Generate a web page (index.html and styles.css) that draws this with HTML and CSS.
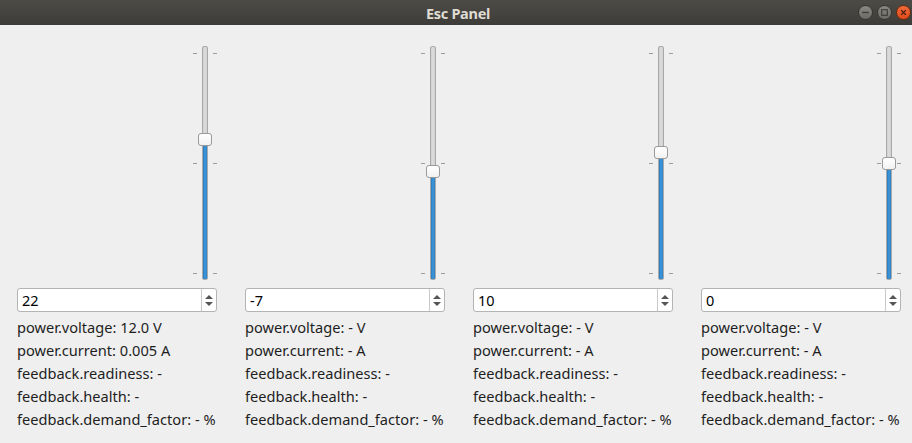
FILE: index.html
```html
<!DOCTYPE html>
<html>
<head>
<meta charset="utf-8">
<link rel="stylesheet" href="styles.css">
</head>
<body>
<div class="window">
  <div class="titlebar">
    <span class="title">Esc Panel</span>
    <div class="controls">
      <span class="wbtn"><svg width="14" height="14" viewBox="0 0 14 14"><line x1="3.5" y1="7" x2="10.5" y2="7" stroke="#3b3a36" stroke-width="1.4"/></svg></span>
      <span class="wbtn"><svg width="14" height="14" viewBox="0 0 14 14"><rect x="4" y="4" width="6" height="6" fill="none" stroke="#3b3a36" stroke-width="1.2"/></svg></span>
      <span class="wbtn close"><svg width="14" height="14" viewBox="0 0 14 14"><path d="M4.5 4.5 L9.5 9.5 M9.5 4.5 L4.5 9.5" stroke="#3b1a10" stroke-width="1.3"/></svg></span>
    </div>
  </div>
  <div class="panel">
    <div class="esc">
      <div class="slider-row">
        <div class="slider">
          <span class="tick l t0"></span><span class="tick r t0"></span>
          <span class="tick l t1"></span><span class="tick r t1"></span>
          <span class="tick l t2"></span><span class="tick r t2"></span>
          <div class="groove"><div class="fill" style="top: 95px"></div></div>
          <div class="handle" style="top: 89px"></div>
        </div>
      </div>
      <div class="spin"><span class="val">22</span><span class="arrows"><i class="up"></i><i class="down"></i></span></div>
      <div class="info">
        <div>power.voltage: 12.0 V</div>
        <div>power.current: 0.005 A</div>
        <div>feedback.readiness: -</div>
        <div>feedback.health: -</div>
        <div>feedback.demand_factor: - %</div>
      </div>
    </div>
    <div class="esc">
      <div class="slider-row">
        <div class="slider">
          <span class="tick l t0"></span><span class="tick r t0"></span>
          <span class="tick l t1"></span><span class="tick r t1"></span>
          <span class="tick l t2"></span><span class="tick r t2"></span>
          <div class="groove"><div class="fill" style="top: 127px"></div></div>
          <div class="handle" style="top: 121px"></div>
        </div>
      </div>
      <div class="spin"><span class="val">-7</span><span class="arrows"><i class="up"></i><i class="down"></i></span></div>
      <div class="info">
        <div>power.voltage: - V</div>
        <div>power.current: - A</div>
        <div>feedback.readiness: -</div>
        <div>feedback.health: -</div>
        <div>feedback.demand_factor: - %</div>
      </div>
    </div>
    <div class="esc">
      <div class="slider-row">
        <div class="slider">
          <span class="tick l t0"></span><span class="tick r t0"></span>
          <span class="tick l t1"></span><span class="tick r t1"></span>
          <span class="tick l t2"></span><span class="tick r t2"></span>
          <div class="groove"><div class="fill" style="top: 108px"></div></div>
          <div class="handle" style="top: 102px"></div>
        </div>
      </div>
      <div class="spin"><span class="val">10</span><span class="arrows"><i class="up"></i><i class="down"></i></span></div>
      <div class="info">
        <div>power.voltage: - V</div>
        <div>power.current: - A</div>
        <div>feedback.readiness: -</div>
        <div>feedback.health: -</div>
        <div>feedback.demand_factor: - %</div>
      </div>
    </div>
    <div class="esc">
      <div class="slider-row">
        <div class="slider">
          <span class="tick l t0"></span><span class="tick r t0"></span>
          <span class="tick l t1"></span><span class="tick r t1"></span>
          <span class="tick l t2"></span><span class="tick r t2"></span>
          <div class="groove"><div class="fill" style="top: 119px"></div></div>
          <div class="handle" style="top: 113px"></div>
        </div>
      </div>
      <div class="spin"><span class="val">0</span><span class="arrows"><i class="up"></i><i class="down"></i></span></div>
      <div class="info">
        <div>power.voltage: - V</div>
        <div>power.current: - A</div>
        <div>feedback.readiness: -</div>
        <div>feedback.health: -</div>
        <div>feedback.demand_factor: - %</div>
      </div>
    </div>
  </div>
</div>
</body>
</html>
```

FILE: styles.css
```css
* { box-sizing: border-box; }
html, body { margin: 0; padding: 0; }
body {
  width: 912px;
  height: 443px;
  overflow: hidden;
  background: #efefef;
  font-family: "Noto Sans", "DejaVu Sans", sans-serif;
  color: #1e1e1e;
}
.window { width: 912px; height: 443px; display: flex; flex-direction: column; }
.titlebar {
  height: 25px;
  flex: none;
  background: linear-gradient(#4d4b46, #3d3c38);
  position: relative;
  display: flex;
  align-items: center;
  justify-content: center;
}
.title {
  color: #dfdbd2;
  font-family: "Noto Sans", "DejaVu Sans", sans-serif;
  font-weight: bold;
  font-size: 14.5px;
  letter-spacing: -0.3px;
  margin-left: 4px;
}
.controls {
  position: absolute;
  right: 1px;
  top: 5px;
  display: flex;
  gap: 4px;
}
.wbtn {
  width: 15px; height: 15px;
  border-radius: 50%;
  background: linear-gradient(#8a8883, #6c6a65);
  border: 1px solid #35342f;
  display: flex; align-items: center; justify-content: center;
}
.wbtn svg { width: 13px; height: 13px; }
.close { background: linear-gradient(#f26b3a, #df4a18); border-color: #6a2a10; }
.panel {
  display: grid;
  grid-template-columns: repeat(4, 200px);
  column-gap: 28px;
  padding: 19px 0 0 17px;
}
.esc { display: flex; flex-direction: column; }
.slider-row { display: flex; justify-content: flex-end; height: 238px; }
.slider { position: relative; width: 24px; height: 238px; }
.tick {
  position: absolute;
  width: 4px; height: 1px;
  background: #9c9c9c;
}
.tick.l { left: 0; }
.tick.r { right: 0; }
.t0 { top: 9px; }
.t1 { top: 119px; }
.t2 { top: 229px; }
.groove {
  position: absolute;
  left: 9px; top: 2px;
  width: 6px; height: 234px;
  border: 1px solid #a9a9a9;
  border-radius: 2px;
  background: linear-gradient(90deg, #cfcfcf, #dedede 50%, #cfcfcf);
  overflow: hidden;
}
.fill {
  position: absolute;
  left: -1px; right: -1px; bottom: -1px;
  background: linear-gradient(90deg, #2a79b8, #3d97dc 50%, #2f82c4);
  border: 1px solid #1f5f92;
  border-radius: 0 0 2px 2px;
}
.handle {
  position: absolute;
  left: 5px;
  width: 14px; height: 13px;
  border: 1px solid #9a9a9a;
  border-radius: 3px;
  background: linear-gradient(#ffffff, #f2f2f2);
}
.spin {
  margin-top: 6px;
  height: 24px;
  border: 1px solid #b4b4b4;
  border-radius: 3px;
  background: #ffffff;
  display: flex;
  align-items: center;
  font-size: 14.5px;
}
.spin .val { flex: 1; padding-left: 4px; color: #000; }
.arrows {
  width: 15px;
  height: 100%;
  border-left: 1px solid #c9c9c9;
  display: flex;
  flex-direction: column;
  align-items: center;
  justify-content: center;
  gap: 3px;
}
.arrows i { width: 0; height: 0; border-left: 4px solid transparent; border-right: 4px solid transparent; }
.arrows .up { border-bottom: 4px solid #555; }
.arrows .down { border-top: 4px solid #555; }
.info {
  margin-top: 4px;
  font-size: 14.6px;
  line-height: 23px;
  white-space: nowrap;
}
```
